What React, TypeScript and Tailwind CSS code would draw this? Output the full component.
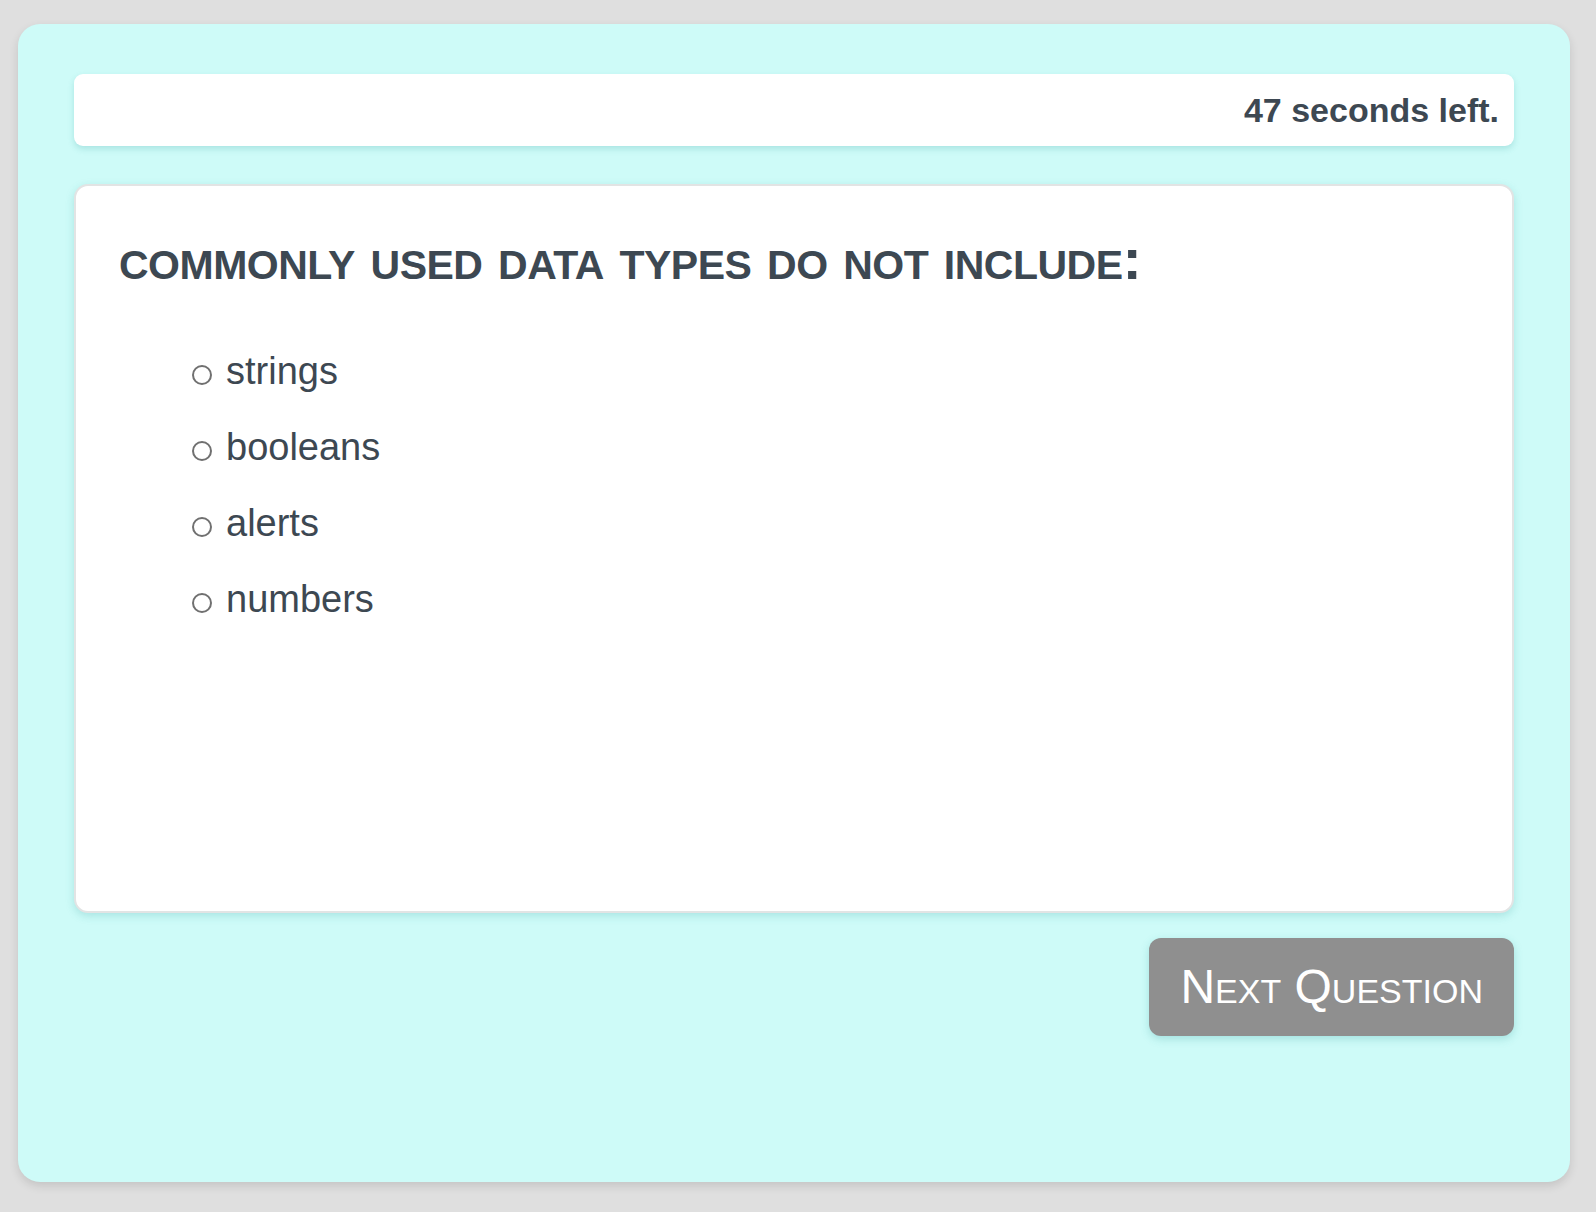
import React from "react";

const options = ["strings", "booleans", "alerts", "numbers"];

export default function App() {
  return (
    <div
      className="min-h-[1212px] w-full bg-[#dfdfdf] pt-[24px] pl-[18px]"
      style={{ fontFamily: '"Liberation Sans", Arial, Helvetica, sans-serif' }}
    >
      <div className="flex h-[1158px] w-[1552px] flex-col rounded-[22px] bg-[#cefbf8] px-[56px] pt-[50px] shadow-[0_4px_10px_rgba(0,0,0,0.12)]">
        <div className="flex h-[72px] items-center justify-end rounded-[9px] bg-white pr-[15px] shadow-[0_3px_6px_rgba(40,150,150,0.22)]">
          <span className="text-[34px] font-bold leading-none text-[#3d4852]">47 seconds left.</span>
        </div>

        <div className="mt-[38px] h-[729px] rounded-[14px] border-2 border-[#e2e4e4] bg-white pl-[43px] pt-[44px] shadow-[0_3px_8px_rgba(40,150,150,0.22)]">
          <h1 className="text-[58px] font-bold leading-none tracking-[-0.5px] text-[#3d4852] [font-variant-caps:small-caps]">
            commonly used data types do not include:
          </h1>
          <ul className="mt-[45px] flex flex-col pl-[73px]">
            {options.map((o) => (
              <li key={o} className="flex h-[76px] items-center gap-[14px]">
                <span className="mt-[7px] block h-[20px] w-[20px] rounded-full border-2 border-[#707070]" />
                <span className="text-[38px] leading-none text-[#3d4852]">{o}</span>
              </li>
            ))}
          </ul>
        </div>

        <div className="mt-[25px] flex justify-end">
          <button className="flex h-[98px] items-center rounded-[12px] bg-[#8f8f8f] px-[31px] text-[48px] leading-none text-white shadow-[0_3px_8px_rgba(40,150,150,0.25)] [font-variant-caps:small-caps]">
            Next Question
          </button>
        </div>
      </div>
    </div>
  );
}
